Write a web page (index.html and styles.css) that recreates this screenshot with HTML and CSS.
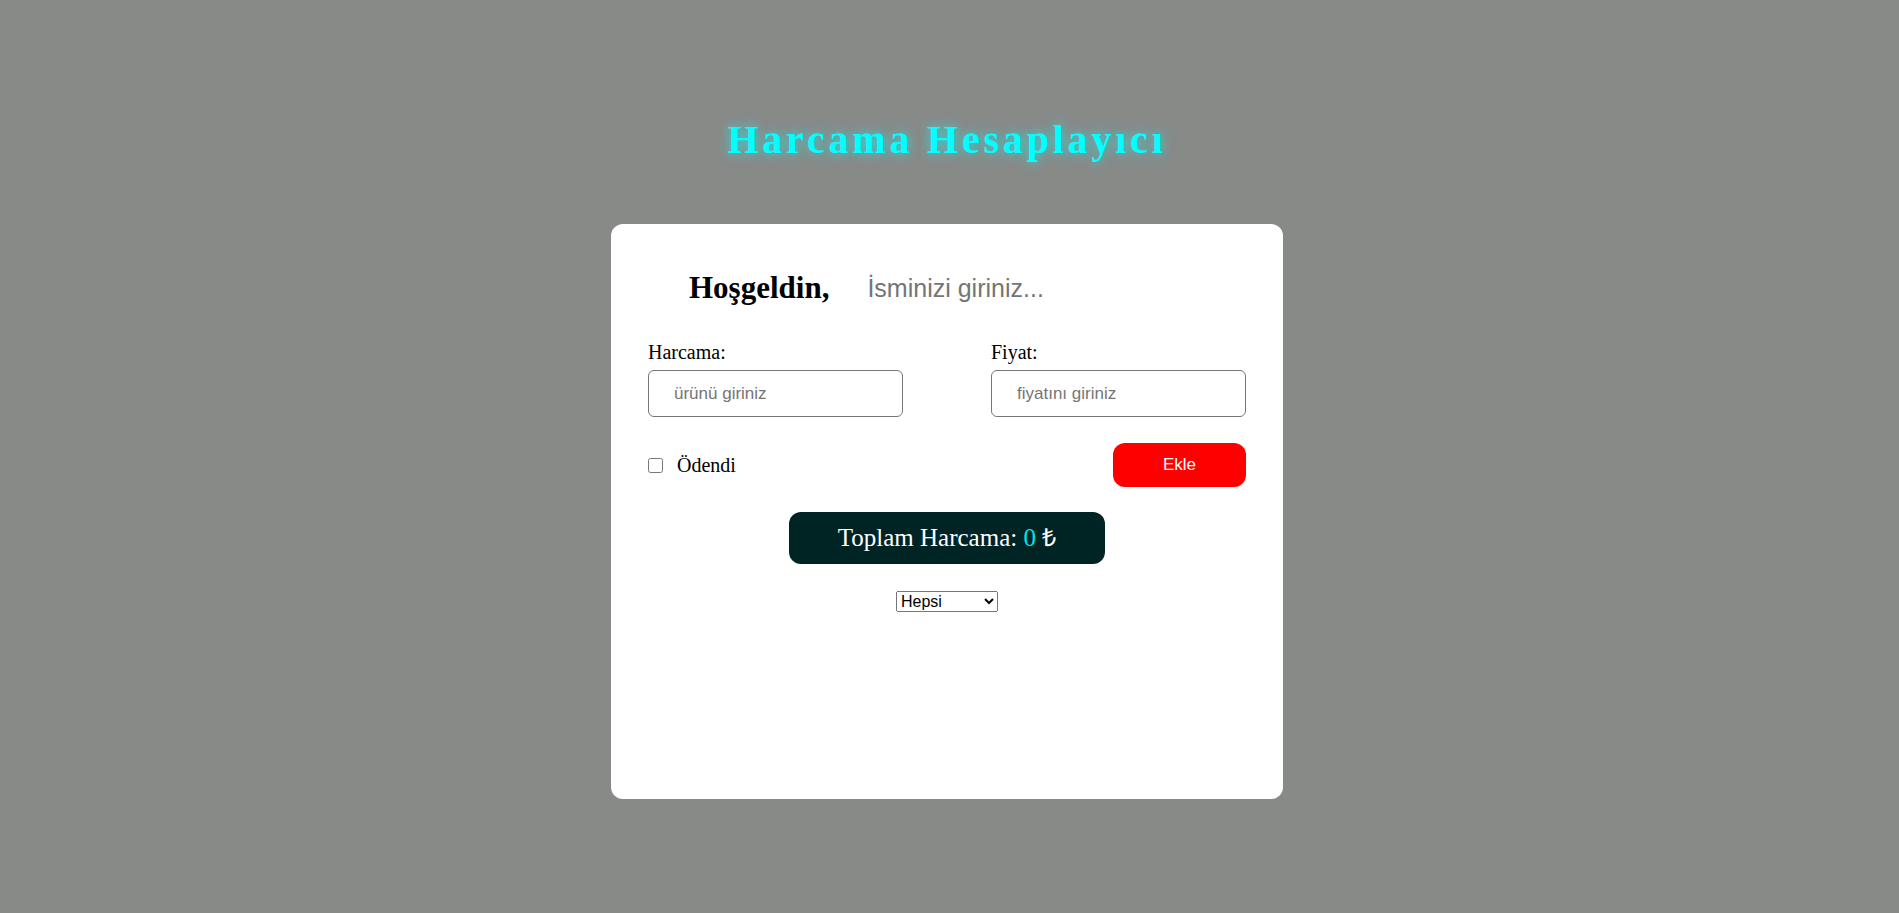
FILE: index.html
```html
<!DOCTYPE html>
<html lang="tr">
<head>
<meta charset="utf-8">
<title>Harcama Hesaplayıcı</title>
<link rel="stylesheet" href="styles.css">
</head>
<body>
  <h1 class="title">Harcama Hesaplayıcı</h1>
  <main class="card">
    <div class="greeting">
      <h2 class="greeting-title">Hoşgeldin,</h2>
      <input class="name-input" type="text" placeholder="İsminizi giriniz...">
    </div>
    <div class="fields">
      <div class="field">
        <label class="field-label" for="urun">Harcama:</label>
        <input class="field-input" id="urun" type="text" placeholder="ürünü giriniz">
      </div>
      <div class="field">
        <label class="field-label" for="fiyat">Fiyat:</label>
        <input class="field-input" id="fiyat" type="text" placeholder="fiyatını giriniz">
      </div>
    </div>
    <div class="actions">
      <label class="paid">
        <input class="paid-box" type="checkbox">
        <span class="paid-text">Ödendi</span>
      </label>
      <button class="add-btn" type="button">Ekle</button>
    </div>
    <div class="total">Toplam Harcama: <span class="total-value">0</span> ₺</div>
    <div class="filter">
      <select class="filter-select">
        <option>Hepsi</option>
        <option>Ödenenler</option>
        <option>Ödenmeyenler</option>
      </select>
    </div>
  </main>
</body>
</html>
```
FILE: styles.css
```css
* {
  box-sizing: border-box;
}

body {
  margin: 0;
  padding: 118px 5px 0 0;
  background: #888a88;
  font-family: "Liberation Serif", "Times New Roman", serif;
  color: #000;
}

.title {
  margin: 0 0 62px;
  font-size: 40px;
  line-height: 44px;
  font-weight: bold;
  letter-spacing: 3.8px;
  text-align: center;
  color: #00ffff;
  text-shadow: 0 0 12px rgba(0, 255, 255, 0.75);
}

.card {
  width: 672px;
  min-height: 575px;
  margin: 0 auto;
  padding: 46px 37px 30px;
  background: #fff;
  border-radius: 12px;
}

.greeting {
  display: flex;
  align-items: center;
  height: 36px;
}

.greeting-title {
  margin: 0 0 0 41px;
  font-size: 31px;
  line-height: 36px;
  font-weight: bold;
}

.name-input {
  margin-left: 38px;
  height: 36px;
  flex: 1;
  padding: 0;
  border: none;
  outline: none;
  font-family: "Liberation Sans", Arial, sans-serif;
  font-size: 25px;
  color: #333;
  background: transparent;
}

.name-input::placeholder {
  color: #757575;
}

.fields {
  display: flex;
  justify-content: space-between;
  margin-top: 35px;
}

.field {
  display: flex;
  flex-direction: column;
  gap: 6px;
  width: 255px;
}

.field-label {
  font-size: 20px;
  line-height: 23px;
}

.field-input {
  width: 100%;
  height: 47px;
  padding: 0 25px;
  border: 1px solid #767676;
  border-radius: 6px;
  font-family: "Liberation Sans", Arial, sans-serif;
  font-size: 17px;
  outline: none;
}

.field-input::placeholder {
  color: #757575;
}

.actions {
  display: flex;
  align-items: center;
  justify-content: space-between;
  margin-top: 26px;
}

.paid {
  display: flex;
  align-items: center;
  font-size: 20px;
}

.paid-box {
  width: 15px;
  height: 15px;
  margin: 0 14px 0 0;
}

.add-btn {
  width: 133px;
  height: 44px;
  border: none;
  border-radius: 12px;
  background: #ff0000;
  color: #fff;
  font-family: "Liberation Sans", Arial, sans-serif;
  font-size: 17px;
}

.total {
  width: 316px;
  margin: 25px auto 0;
  padding: 12px 0;
  border-radius: 12px;
  background: #002424;
  color: #fff;
  font-size: 25px;
  line-height: 28px;
  text-align: center;
}

.total-value {
  color: #00e5e5;
}

.filter {
  margin-top: 27px;
  text-align: center;
}

.filter-select {
  width: 102px;
  height: 21px;
  font-family: "Liberation Sans", Arial, sans-serif;
  font-size: 16px;
}
```
